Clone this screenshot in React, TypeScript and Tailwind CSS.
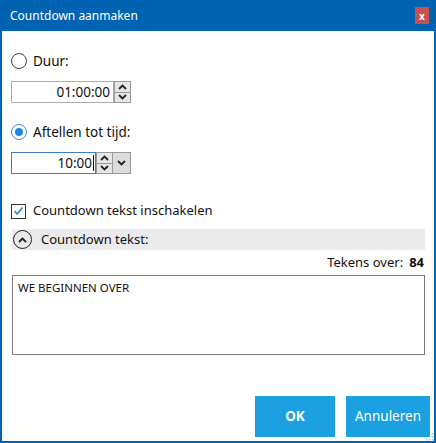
import React from 'react';

const font = { fontFamily: '"Segoe UI", "Noto Sans", "Liberation Sans", sans-serif' };

function Spinner() {
  return (
    <div className="flex flex-col w-[17px] h-full border border-[#9a9a9a] bg-[#e6e6e6]">
      <div className="flex-1 flex items-center justify-center border-b border-[#9a9a9a]">
        <svg width="9" height="6" viewBox="0 0 9 6">
          <path d="M1 5 L4.5 1.5 L8 5" fill="none" stroke="#222" strokeWidth="1.8" />
        </svg>
      </div>
      <div className="flex-1 flex items-center justify-center">
        <svg width="9" height="6" viewBox="0 0 9 6">
          <path d="M1 1 L4.5 4.5 L8 1" fill="none" stroke="#222" strokeWidth="1.8" />
        </svg>
      </div>
    </div>
  );
}

function Radio({ checked, label, mt }: { checked?: boolean; label: string; mt: string }) {
  return (
    <div className={`flex items-center h-[18px] ${mt}`}>
      <div
        className={`w-[16px] h-[16px] rounded-full border flex items-center justify-center bg-white ${
          checked ? 'border-[#3c8fd9]' : 'border-[#444]'
        }`}
      >
        {checked && <div className="w-[8px] h-[8px] rounded-full bg-[#1e88e5]" />}
      </div>
      <span className="ml-[6px] text-[13.5px] text-[#111]">{label}</span>
    </div>
  );
}

export default function App() {
  return (
    <div className="w-[436px] h-[443px] flex flex-col bg-[#0063b1] text-[#111]" style={font}>
      {/* title bar */}
      <div className="h-[31px] flex items-center justify-between pl-[10px] pr-[7px] text-white">
        <span className="text-[12px]">Countdown aanmaken</span>
        <div className="w-[14px] h-[17px] bg-[#c75050] flex items-center justify-center text-[10px] font-bold leading-none">
          x
        </div>
      </div>

      <div className="flex-1 mx-[2px] mb-[2px] bg-white flex flex-col px-[9px] relative">
        <Radio label="Duur:" mt="mt-[21px]" />

        <div className="flex mt-[11px] h-[22px] w-[120px]">
          <div className="flex-1 border border-[#abadb3] flex items-center justify-end pr-[3px] text-[13.5px]">
            01:00:00
          </div>
          <Spinner />
        </div>

        <Radio checked label="Aftellen tot tijd:" mt="mt-[20px]" />

        <div className="flex mt-[11px] h-[22px] w-[120px]">
          <div className="flex-1 border border-[#3f7fbf] flex items-center justify-end pr-[1px] text-[13.5px]">
            10:00
            <span className="w-px h-[16px] bg-[#111] ml-[1px]" />
          </div>
          <Spinner />
          <div className="w-[18px] h-full border-y border-r border-[#9a9a9a] bg-[#dcdcdc] flex items-center justify-center">
            <svg width="9" height="6" viewBox="0 0 9 6">
              <path d="M1 1 L4.5 4.5 L8 1" fill="none" stroke="#222" strokeWidth="1.8" />
            </svg>
          </div>
        </div>

        {/* checkbox */}
        <div className="flex items-center h-[18px] mt-[28px]">
          <div className="w-[15px] h-[15px] border border-[#333] bg-white flex items-center justify-center">
            <svg width="11" height="10" viewBox="0 0 11 10">
              <path d="M1.5 5 L4.2 8 L9.5 1.5" fill="none" stroke="#2f86cf" strokeWidth="1.7" />
            </svg>
          </div>
          <span className="ml-[7px] text-[13px]">Countdown tekst inschakelen</span>
        </div>

        {/* collapsible header */}
        <div className="mt-[9px] ml-[1px] h-[21px] w-[413px] bg-[#ebebee] flex items-center">
          <div className="ml-[1px] w-[19px] h-[19px] rounded-full border-[1.5px] border-[#222] flex items-center justify-center">
            <svg width="9" height="6" viewBox="0 0 9 6">
              <path d="M1 5 L4.5 1.5 L8 5" fill="none" stroke="#222" strokeWidth="1.8" />
            </svg>
          </div>
          <span className="ml-[9px] text-[13px]">Countdown tekst:</span>
        </div>

        <div className="mt-[5px] h-[16px] w-[413px] flex items-center justify-end text-[13px]">
          <span>Tekens over:</span>
          <span className="ml-[6px] font-bold">84</span>
        </div>

        <div className="mt-[4px] ml-[1px] w-[413px] h-[80px] border-[1.5px] border-[#7a7a7a] px-[5px] py-[3px] text-[11.5px]">
          WE BEGINNEN OVER
        </div>

        {/* buttons */}
        <div className="mt-auto mb-[4px] -mr-[5px] flex justify-end gap-[11px]">
          <div className="w-[80px] h-[41px] bg-[#1ba1e2] text-white text-[13.5px] font-bold flex items-center justify-center">
            OK
          </div>
          <div className="w-[84px] h-[41px] bg-[#1ba1e2] text-white text-[13.5px] flex items-center justify-center">
            Annuleren
          </div>
        </div>

        {/* resize grip */}
        <svg className="absolute right-0 bottom-0" width="10" height="10" viewBox="0 0 10 10">
          {[
            [8, 2],
            [8, 5],
            [5, 5],
            [8, 8],
            [5, 8],
            [2, 8],
          ].map(([x, y], i) => (
            <rect key={i} x={x} y={y} width="1.5" height="1.5" fill="#9fd0ee" />
          ))}
        </svg>
      </div>
    </div>
  );
}
